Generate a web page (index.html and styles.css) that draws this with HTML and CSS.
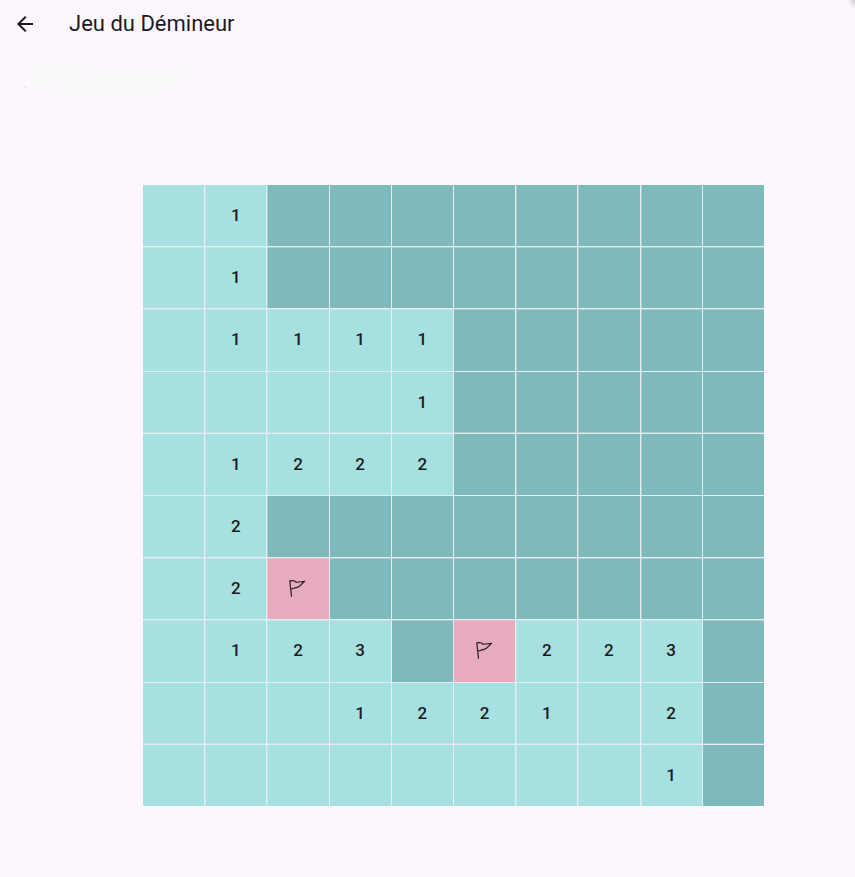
FILE: index.html
```html
<!DOCTYPE html>
<html lang="fr">
<head>
<meta charset="utf-8">
<title>Jeu du Démineur</title>
<link rel="stylesheet" href="styles.css">
</head>
<body>
<header class="app-bar">
  <svg class="back" viewBox="0 0 24 24" aria-hidden="true"><path d="M20 11H7.83l5.59-5.59L12 4l-8 8 8 8 1.41-1.41L7.83 13H20v-2z"/></svg>
  <h1 class="title">Jeu du Démineur</h1>
</header>
<svg class="smudge" viewBox="0 0 220 60" aria-hidden="true">
  <path d="M18 29L28 16 52 14 62 9 75 12 94 12 91 17 132 20 182 16 198 20 206 26 195 33 176 41 160 48 116 49 94 53 57 50 49 42 20 40Z"/>
  <circle cx="25.5" cy="39" r=".6"/>
</svg>
<main class="board" id="board"></main>
<div class="corner"></div>
<script src="board.js"></script>
</body>
</html>
```
FILE: styles.css
```css
body {
  margin: 0;
  height: 877px;
  overflow: hidden;
  background: #fef7ff;
  color: #1d1b20;
  font-family: Roboto, sans-serif;
}

.app-bar {
  display: flex;
  align-items: center;
  height: 48px;
  padding-left: 13px;
}

.back {
  width: 24px;
  height: 24px;
  fill: #1d1b20;
}

.title {
  margin: 0 0 0 32px;
  font-size: 22px;
  line-height: 28px;
  font-weight: 400;
}

.smudge {
  display: block;
  width: 220px;
  height: 60px;
  fill: #fcf9fc;
}

.smudge circle {
  fill: #aaa;
}

.board {
  display: grid;
  grid-template: repeat(10, 61.2px) / repeat(10, 61.2px);
  gap: 1px;
  width: 621px;
  margin: 77px 0 0 143px;
  background: linear-gradient(#e4eef2, #e4eef2);
}

.cell {
  --x: 0px;
  --y: 0px;
  display: flex;
  align-items: center;
  justify-content: center;
  box-sizing: border-box;
  padding-bottom: 1px;
  background: #a6e0e0;
  box-shadow:
    inset var(--x) 0 rgba(240, 240, 248, .35),
    inset 0 var(--y) rgba(240, 240, 248, .35);
  font-size: 17px;
  line-height: 24px;
  font-weight: 500;
}

/* soft second pixel beside the fractional grid lines */
.cell:nth-child(10n + 2),
.cell:nth-child(10n + 7),
.cell:nth-child(10n + 8) {
  --x: 1px;
}

.cell:nth-child(10n + 3),
.cell:nth-child(10n + 9) {
  --x: 1px;
}

.cell:nth-child(n + 11):nth-child(-n + 30),
.cell:nth-child(n + 61):nth-child(-n + 80) {
  --y: 1px;
}

.cell:nth-child(n + 31):nth-child(-n + 40),
.cell:nth-child(n + 81):nth-child(-n + 90) {
  --y: -1px;
}

.hidden {
  background: #7eb9bb;
}

.flagged {
  background: #e8aabf;
}

.flag {
  width: 20px;
  height: 20px;
  margin: 1px 1px 0 0;
  fill: none;
  stroke: #1d1b20;
  stroke-width: 1.15;
  stroke-linejoin: round;
  stroke-linecap: round;
}

.corner {
  position: absolute;
  top: 0;
  right: 0;
  width: 7px;
  height: 9px;
  background: radial-gradient(ellipse at top right, #d2ccd3, #fef7ff 75%);
}
```
FILE: board.js
```js
// "#" is a covered cell, "F" a flagged one, "." an empty one.
const rows = [
  ".1########",
  ".1########",
  ".1111#####",
  "....1#####",
  ".1222#####",
  ".2########",
  ".2F#######",
  ".123#F223#",
  "...1221.2#",
  "........1#"
];
const flag = '<svg class="flag" viewBox="0 0 20 20"><path d="M4.5 17.3L2.8 1.9C5 1.4 7.7 1.5 9 3.1C11.4 3.7 14.5 2.5 17.7 2.3C14.7 4 14.2 7.8 9.5 8.6C7.5 9 6 9.6 3.8 10.2"/></svg>';
const board = document.getElementById("board");
for (const row of rows) {
  for (const value of row) {
    const cell = document.createElement("div");
    cell.className = "cell";
    if (value === "#") cell.classList.add("hidden");
    else if (value === "F") {
      cell.classList.add("flagged");
      cell.innerHTML = flag;
    } else if (value !== ".") cell.textContent = value;
    board.append(cell);
  }
}
```
